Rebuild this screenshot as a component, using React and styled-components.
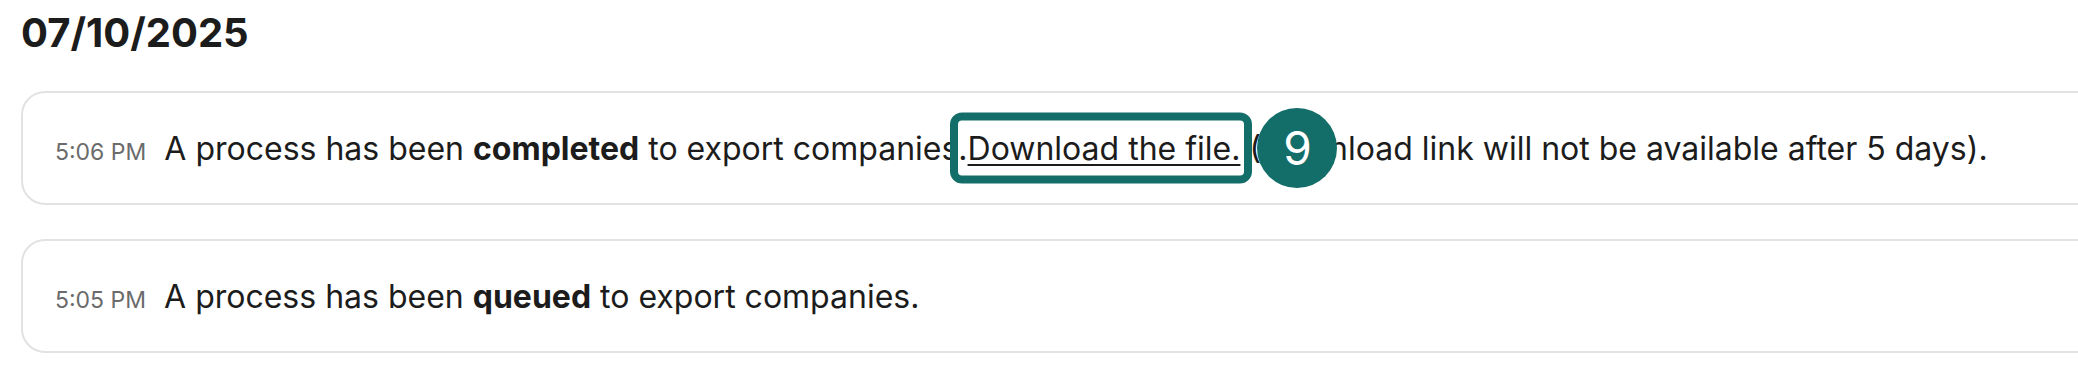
import styled, { createGlobalStyle } from 'styled-components'

const GlobalStyle = createGlobalStyle`
  html, body {
    margin: 0;
    padding: 0;
    background: #ffffff;
    overflow: hidden;
  }

  body {
    font-family: Inter, 'Liberation Sans', Arial, sans-serif;
    color: #1c1c1c;
  }
`

const Page = styled.div`
  padding: 9px 0 0 21px;
`

const DateHeading = styled.h2`
  margin: 0 0 34px;
  font-size: 40px;
  line-height: 48px;
  font-weight: 700;
  color: #1c1c1c;
`

const Feed = styled.ul`
  list-style: none;
  margin: 0;
  padding: 0;
  display: flex;
  flex-direction: column;
  gap: 34px;
`

const Card = styled.li`
  box-sizing: border-box;
  width: 2120px;
  height: 114px;
  display: flex;
  align-items: center;
  padding: 0 32px;
  border: 2px solid #e2e2e2;
  border-radius: 24px;
  background: #ffffff;
`

const Row = styled.div`
  display: flex;
  align-items: baseline;
  gap: 18px;
  white-space: nowrap;
`

const Time = styled.span`
  font-size: 23px;
  color: #6b6b6b;
`

const Message = styled.p`
  margin: 0;
  font-size: 32px;
  color: #1c1c1c;

  strong {
    font-weight: 700;
  }
`

const LinkWrap = styled.span`
  position: relative;
  display: inline-block;
`

const Link = styled.a`
  color: inherit;
  text-decoration: underline;
  text-decoration-thickness: 2px;
  text-underline-offset: 4px;
`

const Highlight = styled.span`
  position: absolute;
  left: -18px;
  right: -12px;
  top: 50%;
  height: 71px;
  transform: translateY(-50%);
  box-sizing: border-box;
  border: 8px solid #136e6a;
  border-radius: 12px;
  pointer-events: none;
`

const Badge = styled.span`
  position: absolute;
  left: calc(100% + 17px);
  top: 50%;
  transform: translateY(-50%);
  width: 80px;
  height: 80px;
  border-radius: 50%;
  background: #136e6a;
  color: #ffffff;
  font-size: 46px;
  font-weight: 400;
  display: flex;
  align-items: center;
  justify-content: center;
`

const events = [
  { time: '5:06 PM', status: 'completed', withLink: true },
  { time: '5:05 PM', status: 'queued', withLink: false },
]

export default function App() {
  return (
    <>
      <GlobalStyle />
      <Page>
        <DateHeading>07/10/2025</DateHeading>
        <Feed>
          {events.map((ev) => (
            <Card key={ev.time}>
              <Row>
                <Time>{ev.time}</Time>
                <Message>
                  A process has been <strong>{ev.status}</strong> to export companies.
                  {ev.withLink && (
                    <>
                      <LinkWrap>
                        <Link href="#">Download the file.</Link>
                        <Highlight />
                        <Badge>9</Badge>
                      </LinkWrap>{' '}
                      (Download link will not be available after 5 days).
                    </>
                  )}
                </Message>
              </Row>
            </Card>
          ))}
        </Feed>
      </Page>
    </>
  )
}
